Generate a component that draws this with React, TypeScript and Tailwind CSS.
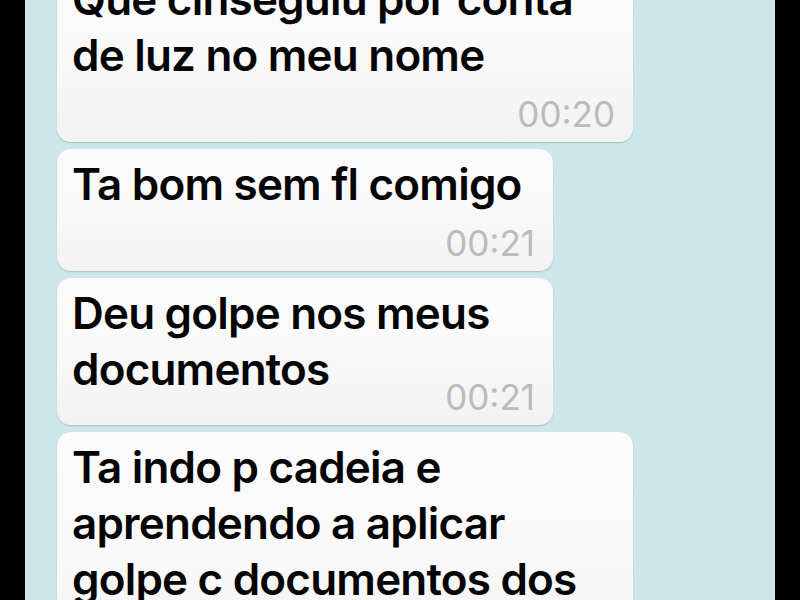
import React from "react";

type Msg = {
  lines: string[];
  time: string;
  width: string;
  inline?: boolean;
};

const messages: Msg[] = [
  {
    lines: ["Que cinseguiu por conta", "de luz no meu nome"],
    time: "00:20",
    width: "w-[576px]",
  },
  { lines: ["Ta bom sem fl comigo"], time: "00:21", width: "w-[496px]" },
  {
    lines: ["Deu golpe nos meus", "documentos"],
    time: "00:21",
    width: "w-[496px]",
    inline: true,
  },
  {
    lines: ["Ta indo p cadeia e", "aprendendo a aplicar", "golpe c documentos dos"],
    time: "00:22",
    width: "w-[576px]",
  },
];

function Bubble({ msg }: { msg: Msg }) {
  return (
    <div
      className={`${msg.width} shrink-0 rounded-[14px] bg-gradient-to-b from-[#fbfbfb] via-[#f9f9f9] to-[#f2f2f2] pl-[15px] pr-[18px] pt-[7px] pb-[10px] shadow-[0_1px_1.5px_rgba(60,90,95,0.28)]`}
    >
      <div className="text-[44px] leading-[56px] font-semibold tracking-[-0.8px] text-[#050505] [font-family:Inter,'Liberation_Sans',sans-serif]">
        {msg.lines.map((l, i) => (
          <div key={i} className="whitespace-nowrap">
            {l}
          </div>
        ))}
      </div>
      <div
        className={`${msg.inline ? "-mt-[18px]" : "mt-[13px]"} text-right text-[35px] leading-[36px] font-normal text-[#bbbbbb] [font-family:Inter,'Liberation_Sans',sans-serif]`}
      >
        {msg.time}
      </div>
    </div>
  );
}

export default function App() {
  return (
    <div className="flex h-[600px] w-[800px] overflow-hidden bg-black">
      <div className="ml-[25px] h-full w-[750px] overflow-hidden bg-[#cde6e9]">
        <div className="-mt-[36px] flex flex-col items-start gap-[7px] pl-[32px]">
          {messages.map((m, i) => (
            <Bubble key={i} msg={m} />
          ))}
        </div>
      </div>
    </div>
  );
}
